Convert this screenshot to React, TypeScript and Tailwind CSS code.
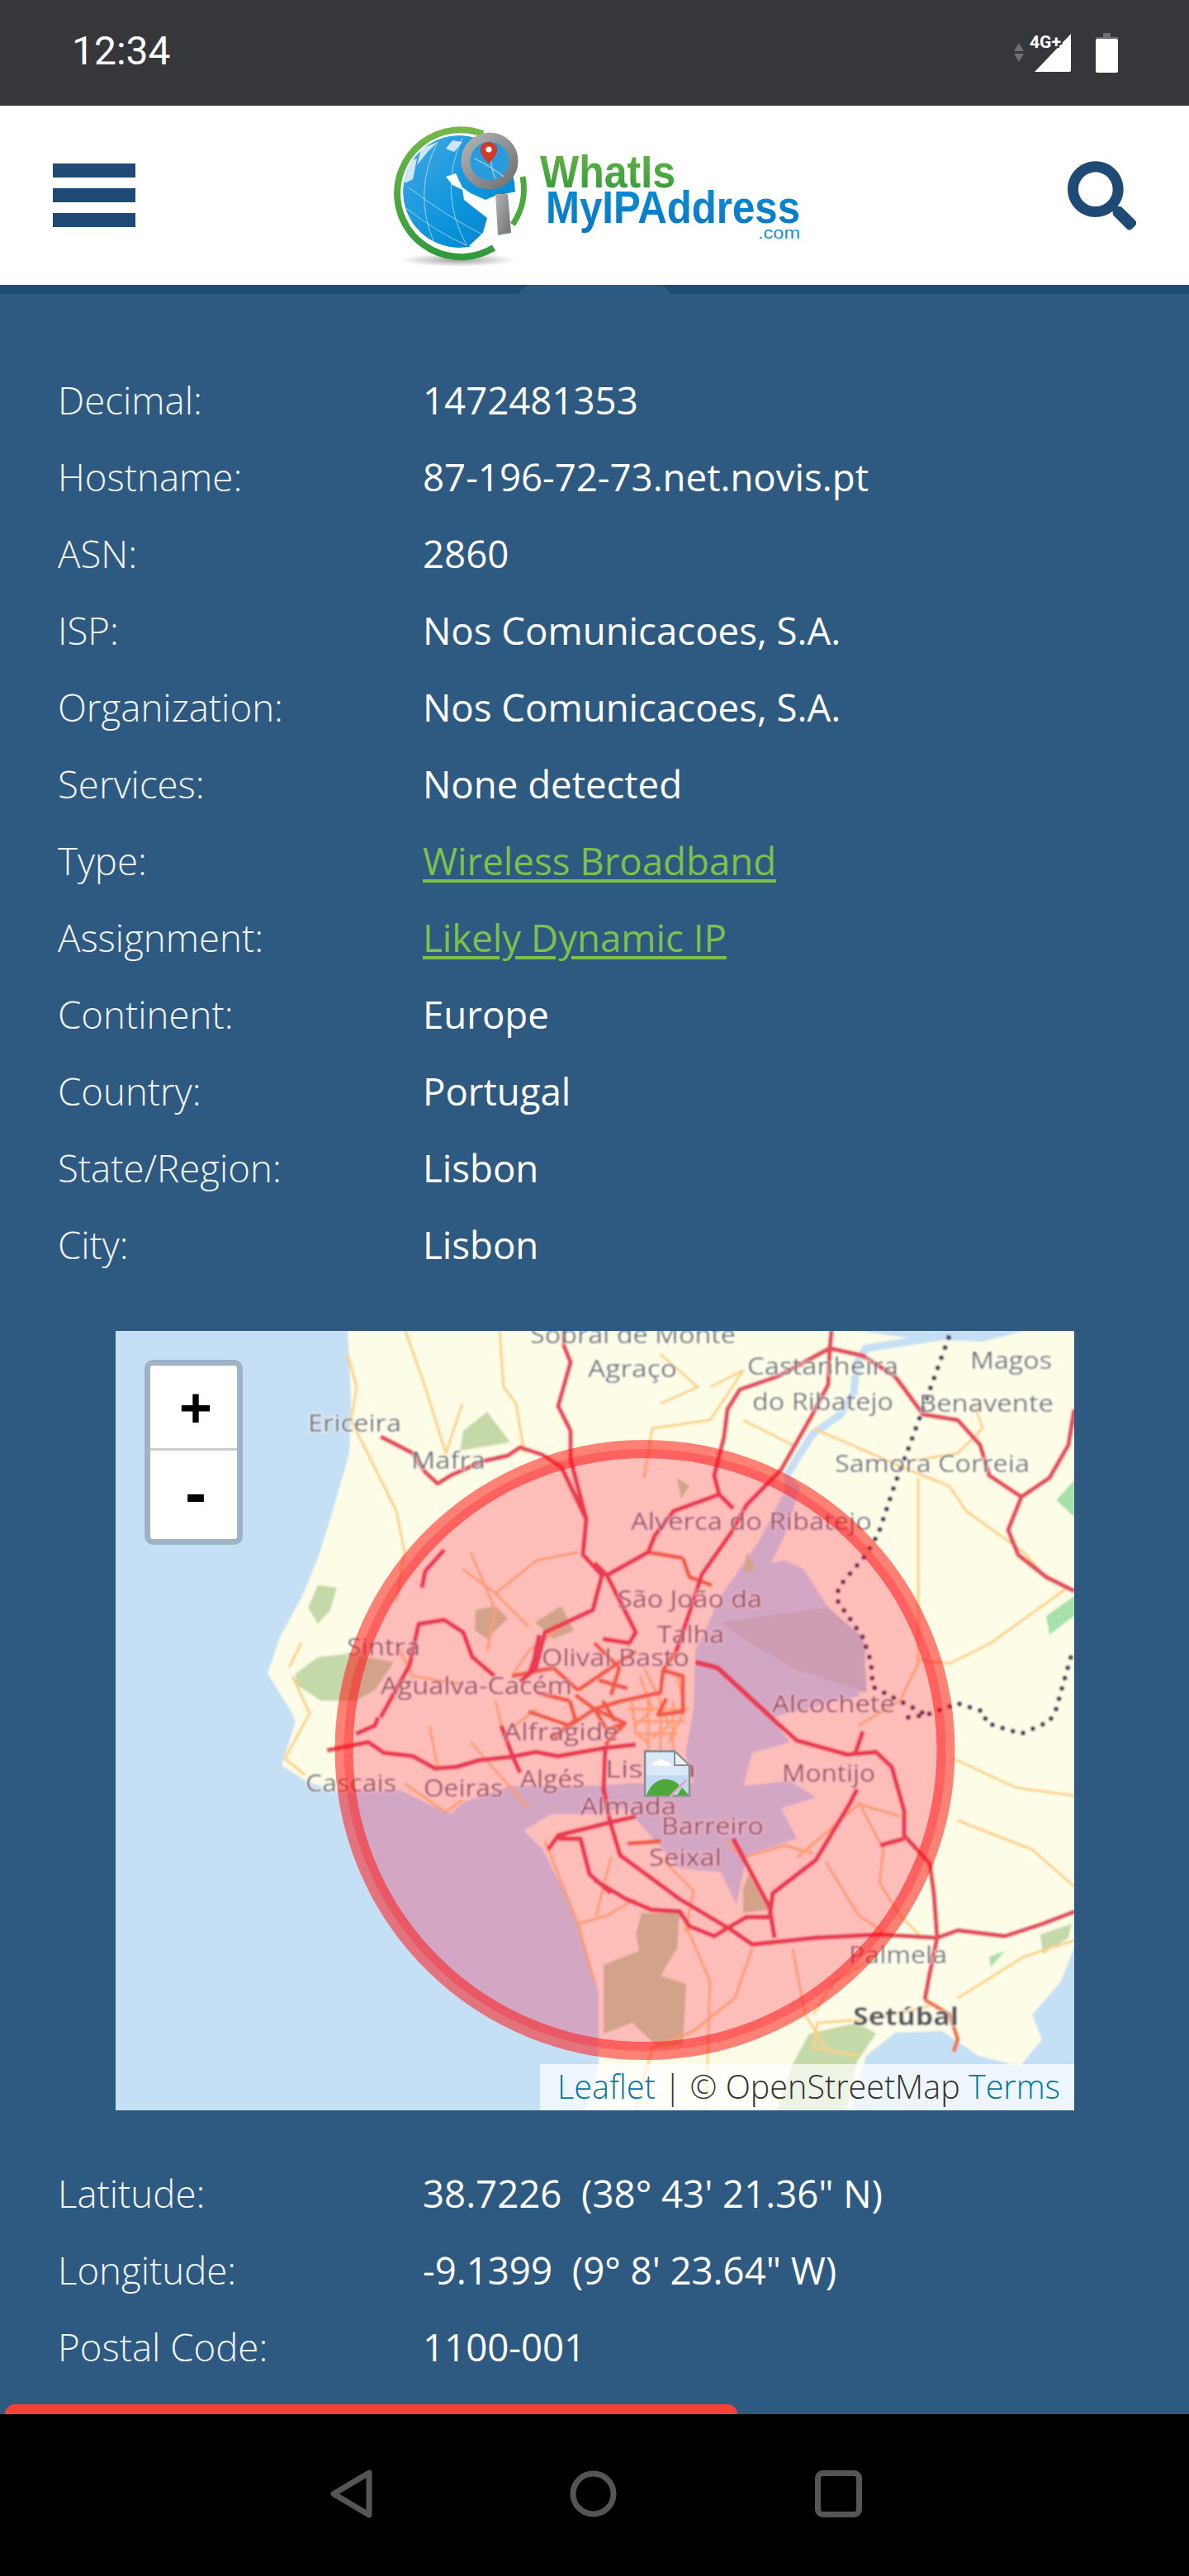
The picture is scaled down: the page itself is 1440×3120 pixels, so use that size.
import React from "react";
import { FaSearch } from "react-icons/fa";

type Row = { k: string; v: string; link?: boolean };

const rowsA: Row[] = [
  { k: "Decimal:", v: "1472481353" },
  { k: "Hostname:", v: "87-196-72-73.net.novis.pt" },
  { k: "ASN:", v: "2860" },
  { k: "ISP:", v: "Nos Comunicacoes, S.A." },
  { k: "Organization:", v: "Nos Comunicacoes, S.A." },
  { k: "Services:", v: "None detected" },
  { k: "Type:", v: "Wireless Broadband", link: true },
  { k: "Assignment:", v: "Likely Dynamic IP", link: true },
  { k: "Continent:", v: "Europe" },
  { k: "Country:", v: "Portugal" },
  { k: "State/Region:", v: "Lisbon" },
  { k: "City:", v: "Lisbon" },
];
const rowsB: Row[] = [
  { k: "Latitude:", v: "38.7226\u00a0\u00a0(38° 43' 21.36\" N)" },
  { k: "Longitude:", v: "-9.1399\u00a0\u00a0(9° 8' 23.64\" W)" },
  { k: "Postal Code:", v: "1100-001" },
];

function InfoRow({ k, v, link }: Row) {
  return (
    <div className="flex h-[93px] items-center text-[45.6px] [font-family:'Open_Sans',sans-serif]">
      <div className="w-[442px] shrink-0 font-light text-[#f1f4f7]">{k}</div>
      {link ? (
        <a className="text-[#7fc04b] underline decoration-[4px] underline-offset-[5px]">{v}</a>
      ) : (
        <div className="text-white">{v}</div>
      )}
    </div>
  );
}

const motorways: string[] = [
  "M683 1612L683 1630L691 1650L676 1703L691 1733L691 1767L710 1840L706 1883L729 1908L718 1950L660 1977L649 2020L630 2037",
  "M461 1740L500 1760L515 1783L530 1797L546 1787L584 1770L615 1763L630 1753L657 1762L680 1777L710 1840",
  "M461 2080L496 2017L507 1967L538 1962L561 1977L572 2007L599 2030",
  "M538 1877L515 1903L511 1923",
  "M1007 1612L1005 1633L942 1667L896 1683L881 1707L877 1740L865 1787L871 1810L816 1830L793 1860L785 1880L735 1908L720 1893",
  "M1005 1633L1003 1677L984 1713L946 1780L904 1823L885 1857L850 1907L835 1953L819 2000",
  "M1005 1633L1045 1642L1084 1667L1118 1713L1160 1720L1187 1750L1198 1787L1237 1813L1271 1790L1294 1750L1301 1707",
  "M1237 1813L1221 1853L1233 1883L1267 1910L1301 1927",
  "M871 1810L888 1827",
  "M735 1908L770 1977L762 1990L730 1985",
  "M842 2013L869 2020L934 2080L965 2108L1026 2125L1061 2122L1080 2140L1095 2193L1095 2223L1126 2257L1131 2293L1135 2347L1126 2390L1120 2422",
  "M1135 2347L1160 2338L1217 2345L1263 2330L1302 2315",
  "M1135 2347L1064 2343L988 2347L911 2355L885 2337L823 2300L751 2247L739 2207L731 2167L733 2117",
  "M720 2277L758 2300L789 2313L823 2315L835 2333L865 2345L885 2333L904 2322L932 2322L936 2293L988 2253L1030 2183L1038 2167",
  "M888 2227L932 2310L938 2347",
  "M1045 2097L1036 2123",
  "M1066 2235L1095 2227",
  "M396 2120L446 2110L465 2123L500 2127L527 2142L553 2140L580 2132L618 2128L649 2122L676 2127L733 2117L770 2113",
  "M431 2100L454 2090L458 2080",
  "M607 2090L622 2130L630 2147",
  "M676 2227L703 2227L714 2270L740 2293",
  "M664 2240L676 2223L740 2207L770 2200",
  "M653 1980L647 2010L640 2030",
];
const trunks: string[] = [
  "M697 2053L720 2070L753 2060L800 2050L803 2023L827 2030L827 2073L797 2077L807 2057",
  "M640 2073L690 2090L720 2070L757 2087L733 2113",
  "M740 2053L750 2020L720 1990",
  "M690 2060L697 2083L670 2105",
  "M700 2047L740 2020L770 2000",
  "M819 2000L803 2023",
  "M827 1887L835 1910L862 1920",
  "M785 1880L827 1887",
  "M1120 2422L1150 2440L1160 2470L1155 2485",
  "M760 2233L800 2230",
  "M620 2030L670 2020L700 2047",
  "M720 2070L735 2095L757 2087",
  "M725 2035L760 2045",
  "M650 2050L690 2060",
  "M730 2060L745 2085",
];
const minors: string[] = [
  "M421 1640L432 1680L425 1720L445 1760L480 1830L490 1880L480 1940",
  "M491 1612L515 1680L532 1735L540 1760L560 1700",
  "M605 1612L610 1680L625 1700L635 1760",
  "M570 1880L600 1950L590 2000",
  "M600 1930L650 1890L700 1880",
  "M560 1900L600 1930L640 1970",
  "M480 1990L500 2030L560 2040",
  "M860 1680L900 1660L860 1720L790 1730L780 1790",
  "M800 1640L845 1680L800 1700",
  "M900 1720L960 1750",
  "M985 1730L1100 1780L1150 1800L1170 1830L1240 1880L1270 1915",
  "M1112 1790L1112 2015L1090 2060L1040 2090",
  "M1290 1925L1200 1990L1150 2015L1110 2010",
  "M1180 1700L1190 1730L1160 1760L1100 1770",
  "M1155 2130L1230 2165L1301 2175",
  "M1160 2205L1250 2240L1301 2285",
  "M1090 2200L1040 2185L1000 2220L965 2250",
  "M1040 2183L1070 2240L1065 2280L1090 2320L1115 2345",
  "M1000 2255L1040 2320L1070 2340",
  "M880 2230L900 2250L950 2235L985 2245",
  "M960 2360L975 2440L1000 2480",
  "M911 2360L890 2420L840 2460L790 2480L770 2556",
  "M1060 2370L1010 2400L985 2440",
  "M1125 2430L1060 2445L990 2450L985 2480L1040 2490",
  "M1160 2420L1240 2370L1301 2350",
  "M350 2020L365 1990",
  "M354 2030L375 2075L345 2130L370 2150",
  "M620 2030L640 2000L680 1970",
  "M780 2020L800 2060L810 2090L790 2105",
  "M765 2060L770 2100L785 2110",
  "M775 2030L790 2070L770 2090",
  "M820 2030L830 2070L810 2110",
  "M600 2060L610 2100L650 2070",
  "M520 2090L530 2140",
  "M640 2190L570 2110",
  "M660 2230L700 2330L720 2400",
  "M700 2330L735 2320L770 2300",
  "M722 2320L740 2250",
  "M830 2330L860 2400L855 2556",
  "M800 2250L840 2290L830 2340",
  "M490 2160L540 2195L560 2180",
  "M770 2085L830 2085M770 2100L820 2100M760 2070L835 2070",
  "M785 2060L785 2120M800 2060L800 2125M815 2060L815 2120",
];

const labels: [string, number, number, number, boolean?][] = [
  ["Sobral de Monte", 642, 1627, 249],
  ["Agraço", 712, 1668, 108],
  ["Castanheira", 905, 1665, 183],
  ["do Ribatejo", 911, 1708, 171],
  ["Magos", 1175, 1658, 99],
  ["Benavente", 1113, 1710, 163],
  ["Samora Correia", 1011, 1783, 236],
  ["Ericeira", 373, 1734, 113],
  ["Mafra", 498, 1779, 90],
  ["Alverca do Ribatejo", 764, 1853, 292],
  ["São João da", 748, 1947, 175],
  ["Talha", 796, 1990, 81],
  ["Sintra", 420, 2005, 89],
  ["Olival Basto", 656, 2018, 179],
  ["Agualva-Cacém", 461, 2052, 232],
  ["Alcochete", 935, 2074, 149],
  ["Alfragide", 610, 2108, 139],
  ["Cascais", 370, 2170, 110],
  ["Oeiras", 513, 2176, 96],
  ["Algés", 630, 2165, 78],
  ["Lisboa", 733, 2153, 110],
  ["Almada", 703, 2198, 116],
  ["Montijo", 947, 2158, 113],
  ["Barreiro", 801, 2222, 124],
  ["Seixal", 786, 2260, 88],
  ["Palmela", 1028, 2378, 119],
  ["Setúbal", 1033, 2453, 128, true],
];

function MapArt() {
  return (
    <svg viewBox="140 1612 1161 944" className="block h-full w-full" xmlns="http://www.w3.org/2000/svg">
      <defs>
        <filter id="tile" x="-2%" y="-2%" width="104%" height="104%">
          <feGaussianBlur stdDeviation="1.1" />
        </filter>
        <clipPath id="mapclip">
          <rect x="140" y="1612" width="1161" height="944" />
        </clipPath>
      </defs>
      <g clipPath="url(#mapclip)">
        <rect x="140" y="1612" width="1161" height="944" fill="#c5dff5" />
        <g filter="url(#tile)">
          {/* land */}
          <path
            fill="#fdfce6"
            d="M421 1612L425 1693L423 1760L400 1840L385 1887L366 1933L339 1983L324 2027L354 2075L358 2085L341 2138L370 2157L408 2170L484 2168L523 2187L546 2197L561 2183L618 2163L725 2163L760 2160L840 2160L830 2125L840 2070L842 2000L873 1933L919 1867L950 1807L950 1787L953 1785L970 1800L950 1860L934 1893L950 1890L973 1900L1003 1947L1049 1993L1045 2053L934 2080L957 2110L911 2123L900 2163L957 2157L988 2177L946 2190L965 2227L904 2247L892 2307L873 2267L823 2263L785 2220L758 2190L720 2197L668 2197L634 2217L657 2240L695 2313L725 2413L725 2500L710 2556L1301 2556L1301 1612Z"
          />
          <path fill="#fdfce6" d="M1040 2050L1301 1990L1301 2300L1040 2300Z" />
          {/* Sado */}
          <path fill="#c5dff5" d="M1030 2556L1049 2490L1084 2462L1141 2460L1185 2490L1235 2503L1262 2470L1250 2440L1285 2400L1301 2358L1301 2556Z" />
          {/* tidal flats */}
          <path fill="#bccfdc" d="M873 1965L1003 1947L1045 1983L1050 2050L960 2020L900 1985Z" />
          {/* river */}
          <path
            fill="none"
            stroke="#c5dff5"
            strokeWidth="9"
            strokeLinecap="round"
            d="M1152 1617L1049 1633L1038 1650L1034 1687L1018 1713L984 1737L965 1767L953 1787"
          />
          <path fill="#c5dff5" d="M1040 1612L1240 1612L1190 1625L1110 1622Z" />
          {/* woods */}
          <g fill="#c5d9a8">
            <path d="M590 1710L618 1747L557 1757L561 1733Z" />
            <path d="M385 1920L408 1923L400 1950L385 1967L373 1947Z" />
            <path d="M358 2027L385 2007L423 2003L477 2013L454 2047L431 2060L389 2060L358 2040Z" />
            <path d="M731 2380L774 2363L770 2343L777 2317L823 2317L820 2360L800 2393L831 2403L827 2477L797 2480L766 2450L731 2463Z" />
            <path d="M900 2287L907 2270L930 2313L900 2317Z" />
            <path d="M1260 2343L1298 2330L1294 2347L1263 2367Z" />
            <path d="M940 2556L960 2500L980 2463L1038 2450L1061 2463L1038 2497L1026 2556Z" />
            <path d="M576 1950L600 1945L615 1960L590 1985L575 1975Z" />
            <path d="M648 1965L680 1945L695 1975L670 1985Z" />
            <path d="M820 1790L835 1800L825 1815Z" />
            <path d="M905 1880L915 1900L900 1905Z" />
          </g>
          <g fill="#a8e0ab">
            <path d="M1279 1817L1301 1793L1301 1837Z" />
            <path d="M1267 1957L1301 1933L1301 1957L1271 1980Z" />
            <path d="M1198 2370L1217 2363L1200 2383Z" />
          </g>
          {/* roads */}
          <g fill="none" stroke="#fdd084" strokeWidth="3" strokeLinejoin="round">
            {minors.map((d) => (
              <path key={d} d={d} />
            ))}
          </g>
          <g fill="none" stroke="#ee7a50" strokeWidth="5" strokeLinejoin="round">
            {trunks.map((d) => (
              <path key={d} d={d} />
            ))}
          </g>
          <g fill="none" stroke="#e4505f" strokeWidth="5.5" strokeLinejoin="round">
            {motorways.map((d) => (
              <path key={d} d={d} />
            ))}
          </g>
          {/* border */}
          <path
            fill="none"
            stroke="#463a5c"
            strokeWidth="6"
            strokeLinecap="round"
            strokeDasharray="0 13"
            d="M1149 1620L1103 1747L1084 1797L1064 1857L1049 1883L1015 1923L1015 1940L1045 1983L1055 2013L1057 2043L1122 2077"
          />
          <path
            fill="none"
            stroke="#463a5c"
            strokeWidth="6"
            strokeLinecap="round"
            strokeDasharray="0 13"
            d="M1100 2080L1122 2077L1160 2063L1191 2073L1195 2087L1237 2100L1271 2085L1279 2070L1298 2003"
          />
          {/* place names */}
          <g
            fontFamily="'Open Sans', sans-serif"
            fontSize="30"
            fill="#6a6a6e"
            stroke="#ffffff"
            strokeOpacity="0.55"
            strokeWidth="3"
            paintOrder="stroke"
          >
            {labels.map(([t, x, y, w, b]) => (
              <text
                key={t}
                x={x}
                y={y}
                textLength={w}
                lengthAdjust="spacingAndGlyphs"
                fontWeight={b ? 700 : 500}
                fill={b ? "#555558" : "#6a6a6e"}
              >
                {t}
              </text>
            ))}
          </g>
        </g>
        {/* radius */}
        <circle cx="781" cy="2119.5" r="364.5" fill="#ff0033" fillOpacity="0.25" stroke="#ff1010" strokeOpacity="0.52" strokeWidth="22" />
        {/* broken image marker */}
        <g>
          <path d="M781 2121H817L835 2139V2175H781Z" fill="#c3d9f4" stroke="#8a8f8c" strokeWidth="2.5" />
          <path d="M783 2123H816L833 2140V2150H783Z" fill="#dbe8f8" />
          <path d="M789 2138Q792 2132 797 2133Q800 2128 805 2133Q811 2133 813 2139Z" fill="#ffffff" />
          <path d="M783 2174Q790 2156 805 2155Q818 2155 823 2163L812 2174Z" fill="#4fa83a" />
          <path d="M826 2165L834 2174H820Z" fill="#4fa83a" />
          <path d="M812 2176L831 2156" stroke="#d9a8c4" strokeWidth="3" />
          <path d="M817 2121V2138H835Z" fill="#eef1f4" stroke="#8a8f8c" strokeWidth="2" />
        </g>
      </g>
    </svg>
  );
}

function Logo() {
  return (
    <svg viewBox="470 145 510 180" className="block h-[180px] w-[510px]" xmlns="http://www.w3.org/2000/svg">
      <defs>
        <linearGradient id="ring" x1="0" y1="0" x2="0" y2="1">
          <stop offset="0" stopColor="#74b84a" />
          <stop offset="1" stopColor="#2f9a3c" />
        </linearGradient>
        <linearGradient id="globe" x1="0" y1="0" x2="1" y2="1">
          <stop offset="0" stopColor="#45a8e4" />
          <stop offset="0.6" stopColor="#0a93dc" />
          <stop offset="1" stopColor="#0d7cc4" />
        </linearGradient>
        <linearGradient id="w1" x1="0" y1="0" x2="0" y2="1">
          <stop offset="0" stopColor="#6cb545" />
          <stop offset="1" stopColor="#2f9a3c" />
        </linearGradient>
        <linearGradient id="w2" x1="0" y1="0" x2="0" y2="1">
          <stop offset="0" stopColor="#0a8fd6" />
          <stop offset="1" stopColor="#0b76c2" />
        </linearGradient>
        <linearGradient id="steel" x1="0" y1="0" x2="1" y2="1">
          <stop offset="0" stopColor="#b0b2b4" />
          <stop offset="1" stopColor="#6f7173" />
        </linearGradient>
        <radialGradient id="shade">
          <stop offset="0" stopColor="#808080" stopOpacity="0.75" />
          <stop offset="1" stopColor="#808080" stopOpacity="0" />
        </radialGradient>
        <clipPath id="globeclip">
          <path d="M556 162A68 68 0 1 0 556 298A68 68 0 1 0 556 162Z" />
        </clipPath>
      </defs>
      <ellipse cx="555" cy="313" rx="70" ry="8" fill="url(#shade)" />
      <path d="M585 160A77 77 0 1 0 598 298" fill="none" stroke="url(#ring)" strokeWidth="8" />
      <path d="M633 212A77 77 0 0 1 621 270" fill="none" stroke="#4aa83f" strokeWidth="7" />
      <g clipPath="url(#globeclip)">
        <circle cx="556" cy="230" r="68" fill="url(#globe)" />
        <g fill="none" stroke="#ffffff" strokeOpacity="0.55" strokeWidth="1">
          <path d="M495 225Q540 260 590 285" />
          <path d="M492 250Q530 280 565 295" />
          <path d="M530 170Q500 230 525 290" />
          <path d="M560 165Q530 230 565 295" />
        </g>
        <path d="M510 178L530 170L518 182L505 198Z M548 168L560 170L550 182L540 178Z M490 195L505 190L500 215L490 220Z" fill="#cfe6f7" />
        <path
          d="M540 212L552 208L560 225L570 232L588 240L600 235L625 230L625 300L568 296L585 280L590 262L572 248L562 240L560 228L548 222Z"
          fill="#ffffff"
        />
      </g>
      <circle cx="593" cy="193" r="29" fill="#2a9bdc" stroke="url(#steel)" strokeWidth="11" />
      <path d="M575 190Q595 200 610 212M598 170Q590 190 600 215" fill="none" stroke="#fff" strokeOpacity="0.6" strokeWidth="1.2" />
      <path
        d="M592 170C584 170 581 176 582 181C583 186 588 192 592 196C596 192 601 186 602 181C603 176 600 170 592 170Z"
        fill="#cf3a2a"
      />
      <circle cx="592" cy="179" r="3.6" fill="#ffffff" />
      <path d="M600 233L615 233L619 280L603 283Z" fill="url(#steel)" />
      <g fontFamily="'Liberation Sans', sans-serif" fontWeight="700">
        <text x="654" y="225" fontSize="56" fill="url(#w1)" textLength="164" lengthAdjust="spacingAndGlyphs">
          WhatIs
        </text>
        <text x="661" y="268" fontSize="56" fill="url(#w2)" textLength="308" lengthAdjust="spacingAndGlyphs">
          MyIPAddress
        </text>
      </g>
      <text x="918" y="287" fontFamily="'Liberation Sans', sans-serif" fontSize="21" fill="#1a8fd4" textLength="51" lengthAdjust="spacingAndGlyphs">
        .com
      </text>
    </svg>
  );
}

export default function App() {
  return (
    <div className="flex h-[3120px] w-[1440px] flex-col overflow-hidden bg-[#2e5a82]">
      {/* status bar */}
      <div className="flex h-[128px] shrink-0 items-start justify-between bg-[#36373b] pl-[87px] pr-[84px]">
        <div className="mt-[33px] text-[48px] leading-[58px] text-white [font-family:Roboto,sans-serif]">12:34</div>
        <svg viewBox="1220 36 136 56" className="mt-[36px] h-[56px] w-[136px]" xmlns="http://www.w3.org/2000/svg">
          <path d="M1234 52L1240 62H1228Z" fill="#6e6f72" />
          <path d="M1234 75L1240 65H1228Z" fill="#6e6f72" />
          <path d="M1297 41V85Q1297 87 1295 87H1253Z" fill="#ffffff" />
          <text
            x="1247"
            y="58"
            fontSize="20"
            fontWeight="700"
            fill="#ffffff"
            stroke="#36373b"
            strokeWidth="4"
            paintOrder="stroke"
            fontFamily="Roboto, sans-serif"
            textLength="38"
            lengthAdjust="spacingAndGlyphs"
          >
            4G+
          </text>
          <rect x="1336" y="40" width="9" height="6" fill="#6e6f72" />
          <rect x="1327" y="45" width="27" height="2" fill="#6e6f72" />
          <rect x="1327" y="47" width="27" height="41" rx="2" fill="#ffffff" />
        </svg>
      </div>

      {/* site header */}
      <div className="flex h-[217px] shrink-0 items-center bg-white pl-[64px] pr-[64px]">
        <div className="flex w-[103px] flex-col gap-[13px]">
          <div className="h-[17px] bg-[#1f4a75]" />
          <div className="h-[17px] bg-[#1f4a75]" />
          <div className="h-[17px] bg-[#1f4a75]" />
        </div>
        <div className="ml-[306px]">
          <Logo />
        </div>
        <FaSearch className="ml-[313px] h-[86px] w-[86px] text-[#1f4a75]" />
      </div>

      {/* band */}
      <div className="relative h-[11px] shrink-0 bg-[#1f4a75]">
        <svg viewBox="0 0 186 11" className="absolute left-[627px] top-0 h-[11px] w-[186px]" xmlns="http://www.w3.org/2000/svg">
          <path d="M0 11L11 0H175L186 11Z" fill="#2e5a82" />
        </svg>
      </div>

      {/* main */}
      <div className="flex min-h-0 flex-1 flex-col justify-between">
        <div className="pl-[70px] pt-[82px]">
          {rowsA.map((r) => (
            <InfoRow key={r.k} {...r} />
          ))}
          <div className="relative ml-[70px] mt-[58px] h-[944px] w-[1161px]">
            <MapArt />
            {/* zoom control */}
            <div className="absolute left-[35px] top-[35px] w-[119px] rounded-[10px] border-[7px] border-[#9fb3c8] bg-white">
              <div className="flex h-[103px] items-center justify-center border-b-[3px] border-[#cccccc] pl-[5px] text-[64px] font-bold leading-none text-black [font-family:'DejaVu_Sans_Mono',monospace]">
                +
              </div>
              <div className="flex h-[107px] items-center justify-center pl-[5px] text-[64px] font-bold leading-none text-black [font-family:'DejaVu_Sans_Mono',monospace]">
                -
              </div>
            </div>
            {/* attribution */}
            <div className="absolute bottom-0 right-0 flex h-[56px] w-[647px] items-center justify-end bg-white/70 pr-[17px] text-[39.5px] font-light leading-none text-[#333333] [font-family:'Open_Sans',sans-serif]">
              <a className="text-[#0078a8]">Leaflet</a>
              <span>&nbsp;|&nbsp;©&nbsp;OpenStreetMap&nbsp;</span>
              <a className="text-[#0078a8]">Terms</a>
            </div>
          </div>
          <div className="mt-[54px]">
            {rowsB.map((r) => (
              <InfoRow key={r.k} {...r} />
            ))}
          </div>
        </div>
        <div className="ml-[6px] h-[12px] w-[887px] rounded-t-[24px] bg-[#f44336]" />
      </div>

      {/* nav bar */}
      <div className="flex h-[196px] shrink-0 items-center justify-center bg-black pb-[3px]">
        <svg viewBox="385 2985 670 76" className="h-[76px] w-[670px]" xmlns="http://www.w3.org/2000/svg">
          <g fill="none" stroke="#555555" strokeWidth="7" strokeLinejoin="round">
            <path d="M447 2997L404 3022.5L447 3048Z" />
            <circle cx="718.5" cy="3022.5" r="24.5" />
            <rect x="990.5" y="2997.5" width="50" height="50" rx="6" />
          </g>
        </svg>
      </div>
    </div>
  );
}
